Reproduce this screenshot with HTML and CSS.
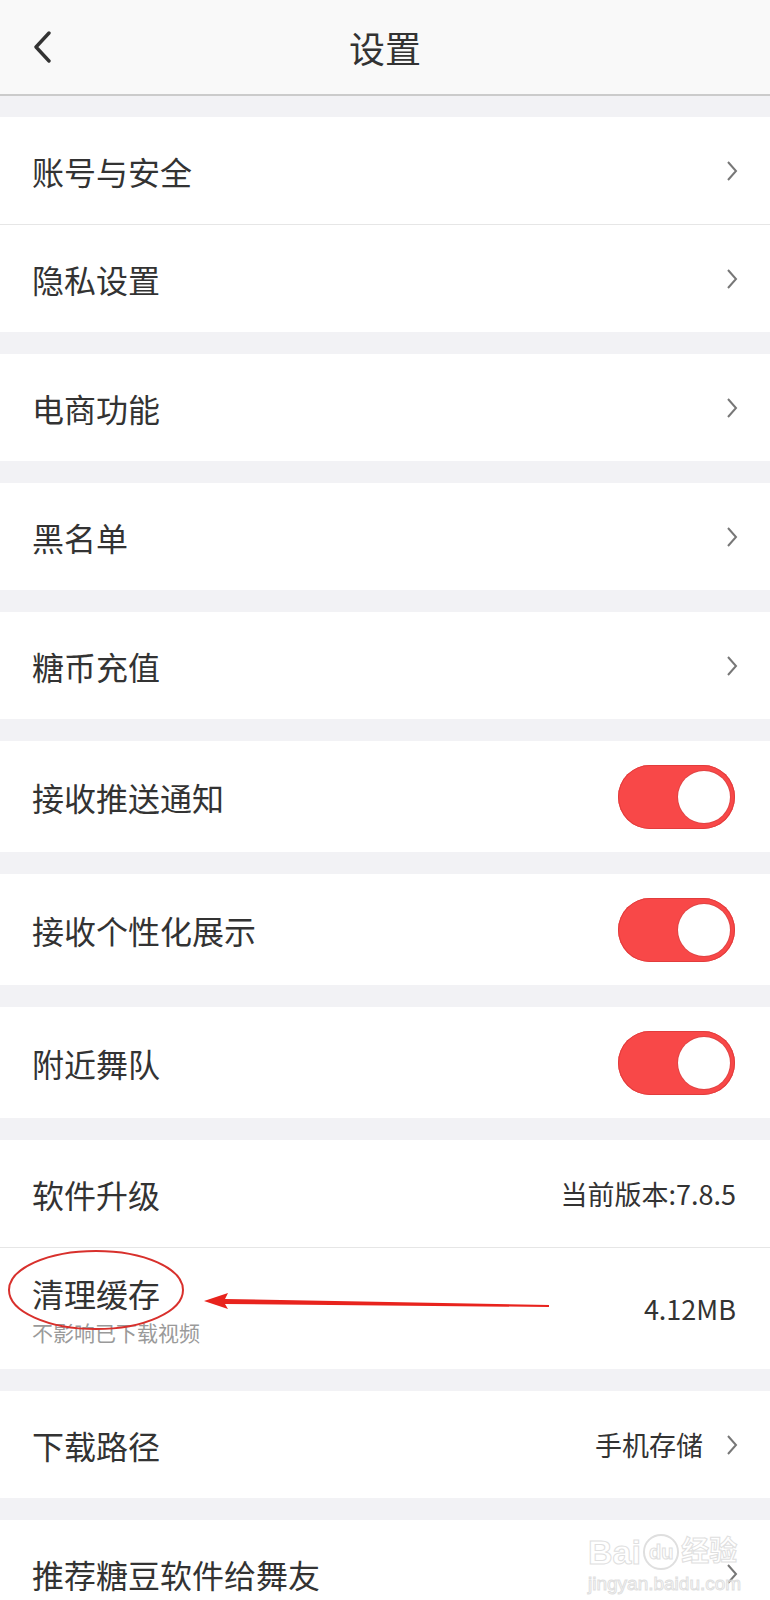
FILE: index.html
```html
<!DOCTYPE html>
<html lang="zh-CN">
<head>
    <meta charset="UTF-8">
    <meta name="viewport" content="width=device-width, initial-scale=1.0">
    <title>设置</title>
    <link rel="stylesheet" href="styles.css">
</head>
<body>
    <div id="topo">
        <a href="#" class="voltar">
            <svg width="20" height="32" viewBox="0 0 20 32"><polyline points="16,2 3,16 16,30" fill="none" stroke="#333" stroke-width="3.4" stroke-linecap="round" stroke-linejoin="round"/></svg>
        </a>
        <h1>设置</h1>
        <span></span>
    </div>

    <div class="grupo">
        <div class="linha">
            <span class="rotulo">账号与安全</span>
            <svg class="seta" width="12" height="22" viewBox="0 0 12 22"><polyline points="2,2 10,11 2,20" fill="none" stroke="#777" stroke-width="2"/></svg>
        </div>
        <div class="linha">
            <span class="rotulo">隐私设置</span>
            <svg class="seta" width="12" height="22" viewBox="0 0 12 22"><polyline points="2,2 10,11 2,20" fill="none" stroke="#777" stroke-width="2"/></svg>
        </div>
    </div>

    <div class="grupo">
        <div class="linha">
            <span class="rotulo">电商功能</span>
            <svg class="seta" width="12" height="22" viewBox="0 0 12 22"><polyline points="2,2 10,11 2,20" fill="none" stroke="#777" stroke-width="2"/></svg>
        </div>
    </div>

    <div class="grupo">
        <div class="linha">
            <span class="rotulo">黑名单</span>
            <svg class="seta" width="12" height="22" viewBox="0 0 12 22"><polyline points="2,2 10,11 2,20" fill="none" stroke="#777" stroke-width="2"/></svg>
        </div>
    </div>

    <div class="grupo">
        <div class="linha">
            <span class="rotulo">糖币充值</span>
            <svg class="seta" width="12" height="22" viewBox="0 0 12 22"><polyline points="2,2 10,11 2,20" fill="none" stroke="#777" stroke-width="2"/></svg>
        </div>
    </div>

    <div class="grupo">
        <div class="linha alta">
            <span class="rotulo">接收推送通知</span>
            <span class="chave"></span>
        </div>
    </div>

    <div class="grupo">
        <div class="linha alta">
            <span class="rotulo">接收个性化展示</span>
            <span class="chave"></span>
        </div>
    </div>

    <div class="grupo">
        <div class="linha alta">
            <span class="rotulo">附近舞队</span>
            <span class="chave"></span>
        </div>
    </div>

    <div class="grupo">
        <div class="linha">
            <span class="rotulo">软件升级</span>
            <span class="valor">当前版本:7.8.5</span>
        </div>
        <div class="linha cache">
            <div class="textos">
                <span class="rotulo">清理缓存</span>
                <span class="sub">不影响已下载视频</span>
            </div>
            <span class="valor">4.12MB</span>
            <!-- marcação vermelha por cima -->
            <svg class="marca" viewBox="0 0 770 121" width="770" height="121">
                <ellipse cx="96" cy="42" rx="87" ry="39" fill="none" stroke="#d8302c" stroke-width="2"/>
                <polygon points="204,53 228,45 225,51 549,57 549,59 225,56 228,61" fill="#e8231d"/>
            </svg>
        </div>
    </div>

    <div class="grupo">
        <div class="linha">
            <span class="rotulo">下载路径</span>
            <span class="direita">
                <span class="valor">手机存储</span>
                <svg class="seta" width="12" height="22" viewBox="0 0 12 22"><polyline points="2,2 10,11 2,20" fill="none" stroke="#777" stroke-width="2"/></svg>
            </span>
        </div>
    </div>

    <div class="grupo">
        <div class="linha">
            <span class="rotulo">推荐糖豆软件给舞友</span>
            <svg class="seta" width="12" height="22" viewBox="0 0 12 22"><polyline points="2,2 10,11 2,20" fill="none" stroke="#777" stroke-width="2"/></svg>
            <div class="marcadagua">
                <div class="wm-linha1"><span>Bai</span><span class="pata">du</span><span class="wm-cn">经验</span></div>
                <div class="wm-linha2">jingyan.baidu.com</div>
            </div>
        </div>
    </div>
</body>
</html>
```

FILE: styles.css
```css
body {
    font-family: "Noto Sans CJK SC", "Noto Sans", sans-serif;
    background-color: #f2f2f5;
    color: #333;
    margin: 0;
    padding: 0;
}

#topo {
    display: grid;
    grid-template-columns: 1fr auto 1fr;
    align-items: center;
    height: 94px;
    padding: 0 33px;
    background-color: #f9f9f9;
    border-bottom: 2px solid #cbcbcb;
}

#topo h1 {
    margin: 0;
    font-size: 36px;
    font-weight: normal;
    color: #333;
    line-height: 1;
}

.voltar {
    display: flex;
    align-items: center;
}

.grupo {
    margin-top: 22px;
    background: #fff;
}

#topo + .grupo {
    margin-top: 21px;
}

.linha {
    display: flex;
    justify-content: space-between;
    align-items: center;
    height: 107px;
    padding: 0 34px 0 32px;
    position: relative;
}

.linha + .linha {
    border-top: 1px solid #e6e6e6;
}

.linha.alta {
    height: 111px;
}

.linha.cache {
    height: 121px;
}

.rotulo {
    font-size: 32px;
    line-height: 1;
    color: #333;
}

.valor {
    font-size: 27px;
    line-height: 1;
    color: #333;
}

.direita {
    display: flex;
    align-items: center;
    gap: 23px;
}

.seta {
    display: block;
    margin-right: -2px;
}

.textos {
    display: flex;
    flex-direction: column;
    gap: 13px;
    padding-top: 3px;
}

.sub {
    font-size: 21px;
    line-height: 1;
    color: #9a9a9a;
}

.chave {
    width: 117px;
    height: 64px;
    border-radius: 32px;
    background-color: #f84848;
    box-shadow: inset 0 0 0 1px #e23c3c;
    position: relative;
    margin-right: 1px;
}

.chave::after {
    content: "";
    position: absolute;
    right: 5px;
    top: 6px;
    width: 52px;
    height: 52px;
    border-radius: 50%;
    background: #fff;
    box-shadow: 0 0 0 1px #e04444;
}

.marca {
    position: absolute;
    left: 0;
    top: 0;
    pointer-events: none;
}

.marcadagua {
    position: absolute;
    left: 588px;
    top: 14px;
    color: #fff;
    -webkit-text-stroke: 1px #dadada;
    font-family: "Liberation Sans", "Noto Sans CJK SC", sans-serif;
    opacity: 0.85;
}

.wm-linha1 {
    display: flex;
    align-items: center;
    font-size: 34px;
    line-height: 1;
    font-weight: bold;
}

.pata {
    font-size: 20px;
    border: 2px solid #dadada;
    border-radius: 50%;
    padding: 6px 4px;
    margin: 0 2px;
}

.wm-cn {
    font-size: 28px;
}

.wm-linha2 {
    font-size: 19px;
    line-height: 1;
    margin-top: 4px;
}
```
